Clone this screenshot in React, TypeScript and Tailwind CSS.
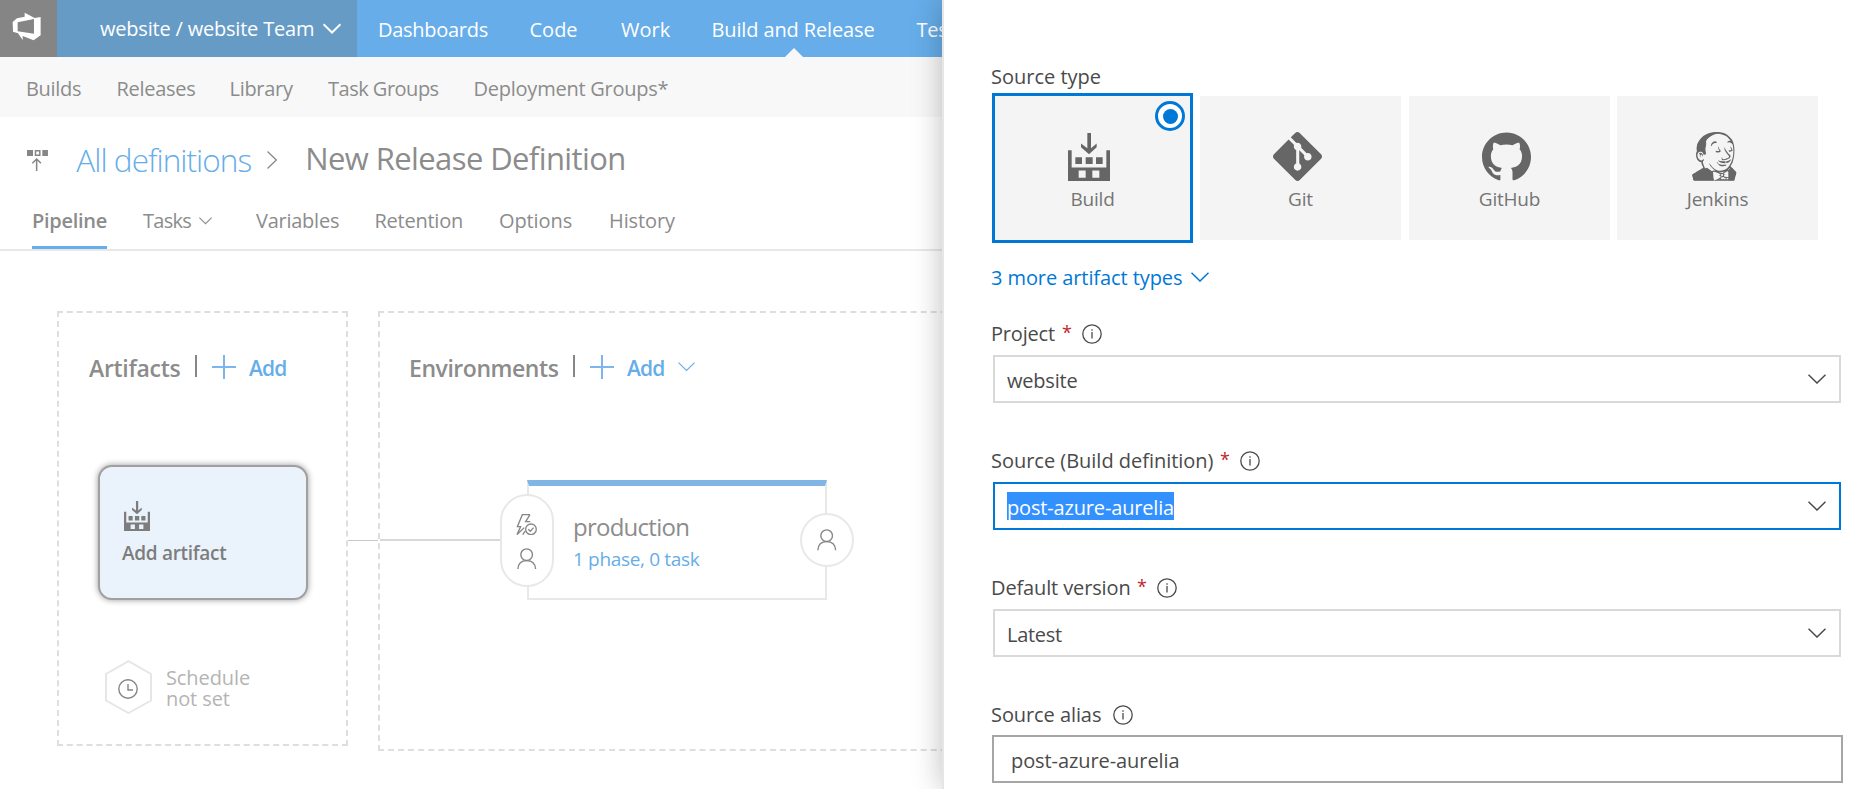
import React from 'react';
import { FaJenkins } from 'react-icons/fa';
import { SiGit, SiGithub } from 'react-icons/si';

function Chevron({ className = '', stroke = 1.3 }: { className?: string; stroke?: number }) {
  return (
    <svg viewBox="0 0 18 10" className={`shrink-0 ${className}`} fill="none" stroke="currentColor" strokeWidth={stroke}>
      <path d="M0.5 0.7 L9 9 L17.5 0.7" />
    </svg>
  );
}

function Plus() {
  return (
    <svg viewBox="0 0 24 24" className="ml-[15px] h-6 w-6 shrink-0" stroke="#7db5ec" strokeWidth="2">
      <path d="M12 0V24M0 12H24" />
    </svg>
  );
}

function BuildIcon({ className = '' }: { className?: string }) {
  return (
    <svg viewBox="294 245 126 145" className={className} fill="currentColor" preserveAspectRatio="none">
      <path
        fillRule="evenodd"
        d="M294 297h11v52h104v-52h11v93H294zM326 358v22h21v-22zM367 358v22h21v-22z"
      />
      <path d="M316 318h20v21h-20zM347 318h21v21h-21zM378 318h20v21h-20z" />
      <path d="M352 245h11v46l17-14v11l-23 21-24-21v-11l19 14z" />
    </svg>
  );
}

function Person() {
  return (
    <svg viewBox="0 0 58 64" className="h-[21.3px] w-[19.3px]" fill="none" stroke="#868686" strokeWidth="4.2">
      <circle cx="29" cy="20" r="17.5" />
      <path d="M2.5 64C3.500 46 15 38 29 38S55 46 56 64" />
    </svg>
  );
}

function JenkinsIcon() {
  return (
    <div className="relative flex h-[48.700px] w-[48.700px] items-center justify-center">
      <FaJenkins className="h-[48.700px] w-[48.700px]" />
      <svg viewBox="877 245 132 146" className="absolute inset-y-0 left-[2.500px] h-full w-[44px]" fill="currentColor">
        <path d="M918 311L903 303 892 305C888 285 897 268 912 256 925 247 945 244 960 247 942 250 924 260 919 272 916 284 915 296 918 311z" />
        <path d="M878 373L900 361 922 352 940 365 942 390H881z" />
        <path d="M986 359L996 351 1008 366 1004 390H986z" />
      </svg>
    </div>
  );
}

function Info() {
  return (
    <svg viewBox="0 0 20 20" className="h-5 w-5 shrink-0" fill="none" stroke="#4a4a4a" strokeWidth="1.300">
      <circle cx="10" cy="10" r="9.200" />
      <path d="M10 8V14.500M10 5.200V6.700" />
    </svg>
  );
}

function Label({ text, width, required = true, className = '' }: { text: string; width: string; required?: boolean; className?: string }) {
  return (
    <div className={`-ml-px flex h-[30px] items-center pt-0.5 text-[#4a4a4a] ${className}`}>
      <span className={`shrink-0 ${width}`}>{text}</span>
      {required && <span className="-mt-1 w-5 shrink-0 text-[18px] text-[#c0272d]">*</span>}
      <Info />
    </div>
  );
}

function Select({ border, children }: { border: string; children: React.ReactNode }) {
  return (
    <div className={`ml-px mt-[7px] flex h-12 w-[848px] items-center justify-between border-2 pl-3 pr-[13px] text-[#4a4a4a] ${border}`}>
      {children}
      <Chevron className="-mt-[1px] h-[10px] w-[18px]" stroke={1.5} />
    </div>
  );
}

function Tile({ icon, label, className }: { icon: React.ReactNode; label: string; className: string }) {
  return (
    <div className={`flex w-[201px] flex-col items-center bg-[#f4f4f4] text-[#666] ${className}`}>
      <div className="mr-[7px] mt-9 flex h-[49px] items-center">{icon}</div>
      <div className="mt-[3px] h-[30px] text-[19px] leading-[30px] tracking-[-0.2px] text-[#757575]">{label}</div>
    </div>
  );
}

export default function App() {
  return (
    <div className="flex h-[789px] w-[1850px] overflow-hidden whitespace-nowrap bg-white font-['Open_Sans',sans-serif] text-[20px] leading-[30px] font-normal tracking-[-0.2px] text-[#8c8c8c]">
      <main className="flex w-[942px] shrink-0 flex-col overflow-hidden">
        <header className="flex h-[57px] shrink-0 bg-[#66ade9] text-white">
          <div className="flex w-[57px] shrink-0 bg-[#858585] pl-[12.300px] pt-3">
            <svg viewBox="37 36 88 86" className="h-[28.700px] w-[29.300px]" fill="white">
              <path fillRule="evenodd" d="M39 66L52 55 75 50V38L105 54 123 51V106L102 121 69 108V120L55 100 40 95zM54 67V94L103 101V57z" />
            </svg>
          </div>
          <div className="flex w-[300px] shrink-0 items-center bg-[#669bc6] pl-[43px]">
            <span className="w-[223px]">website / website Team</span>
            <Chevron className="h-[11px] w-[18px]" stroke={2} />
          </div>
          <nav className="flex shrink-0 items-center pl-[21px] pt-[3px]">
            <a className="w-[151.500px] tracking-[-0.280px]">Dashboards</a>
            <a className="w-[91.500px] tracking-normal">Code</a>
            <a className="w-[90.500px] tracking-normal">Work</a>
            <div className="relative flex h-[54px] w-[205px] items-center tracking-[-0.130px]">
              Build and Release
              <svg viewBox="0 0 18 9" className="absolute bottom-0 left-[73px] h-[9px] w-[18px]" fill="#f8f8f8">
                <path d="M0 9L9 0 18 9z" />
              </svg>
            </div>
            <a>Test</a>
          </nav>
        </header>

        <nav className="flex h-[60px] shrink-0 items-center bg-[#f8f8f8] pl-[26px] pt-1 tracking-[-0.300px]">
          <a className="w-[90.500px]">Builds</a>
          <a className="w-[113px]">Releases</a>
          <a className="w-[98.500px]">Library</a>
          <a className="w-[145.500px] tracking-[-0.500px]">Task Groups</a>
          <a className="tracking-[-0.240px]">Deployment Groups*</a>
        </nav>

        <div className="flex h-[86px] shrink-0 items-center pl-[27px]">
          <svg viewBox="81 450 64 63" className="h-[21px] w-[21.300px] shrink-0" fill="#868686">
            <path d="M81 450h18v18H81zM127 450h17v18H127z" />
            <path d="M106.500 452.500h13v13h-13zM110 513V477M97 490L110 477 123 490" fill="none" stroke="#868686" strokeWidth="4.500" />
          </svg>
          <a className="ml-[28px] w-[191px] text-[31.500px] font-light leading-10 tracking-[-0.950px] text-[#66ade9]">All definitions</a>
          <svg viewBox="0 0 10 18" className="h-[18px] w-[10px] shrink-0" fill="none" stroke="#868686" strokeWidth="1.200">
            <path d="M0.500 0.500L9.300 9 0.500 17.500" />
          </svg>
          <h1 className="-mt-[5px] ml-[28px] text-[31px] leading-10 tracking-[-0.600px]">New Release Definition</h1>
        </div>

        <nav className="flex h-12 shrink-0 border-b-2 border-[#e8e8e8] pl-8 leading-[36px]">
          <a className="h-[46px] w-[75px] border-b-[3px] border-[#66ade9] font-semibold tracking-[-0.280px]">Pipeline</a>
          <a className="ml-9 flex w-[113px]">
            <span className="w-14 tracking-[-0.700px]">Tasks</span>
            <Chevron className="mt-[14px] h-[7.500px] w-[13px]" stroke={1.5} />
          </a>
          <a className="w-[118.500px] tracking-[-0.250px]">Variables</a>
          <a className="w-[124.500px] tracking-[-0.250px]">Retention</a>
          <a className="w-[110px] tracking-[-0.100px]">Options</a>
          <a className="tracking-[-0.100px]">History</a>
        </nav>

        <div className="flex pl-[57px] pt-[60px]">
          <section className="h-[435px] w-[291px] shrink-0 border-2 border-dashed border-[#dedede] pt-[36px]">
            <div className="flex h-9 items-center pl-[30px]">
              <h2 className="mt-px w-[106px] text-[23px] font-semibold tracking-[-0.300px]">Artifacts</h2>
              <div className="-mt-0.5 h-[22px] w-0.5 bg-[#868686]" />
              <Plus />
              <a className="ml-[13px] mt-px text-[21px] font-semibold tracking-[-0.800px] text-[#66ade9]">Add</a>
            </div>
            <div className="ml-[39px] mt-[80px] h-[135px] w-[210px] rounded-[14px] border-2 border-[#a0a0a0] bg-[#eaf3fb] pl-6 pt-[34px] text-[#7d7d7d] shadow-[0_0_6px_rgba(0,0,0,0.4)]">
              <BuildIcon className="h-[30px] w-[26px]" />
              <div className="-ml-0.5 mt-[10px] text-[19px] font-semibold leading-6 tracking-[-0.300px]">Add artifact</div>
            </div>
            <div className="ml-[46px] mt-[60px] flex">
              <svg viewBox="0 0 47 54" className="h-[54px] w-[47px]" fill="none">
                <path d="M23.500 1.200L46 14V40.500L23.500 53 1 40.500V14z" stroke="#e6e6e6" strokeWidth="2" />
                <circle cx="23" cy="29" r="9.200" stroke="#868686" strokeWidth="1.400" />
                <path d="M23 24V30H28" stroke="#868686" strokeWidth="1.400" />
              </svg>
              <div className="ml-[14px] mt-[7px] leading-[21px] tracking-[-0.100px] text-[#b4b4b4]">
                Schedule
                <br />
                not set
              </div>
            </div>
          </section>

          <div className="mt-[229px] h-px w-[30px] shrink-0 bg-[#c8c8c8]" />

          <section className="h-[440px] w-[820px] shrink-0 border-2 border-dashed border-[#dedede] pt-[36px]">
            <div className="flex h-9 items-center pl-[29px]">
              <h2 className="mt-px w-[164px] text-[23px] font-semibold tracking-[-0.450px]">Environments</h2>
              <div className="-mt-0.5 h-[22px] w-0.5 bg-[#868686]" />
              <Plus />
              <a className="ml-[13px] mt-px w-[51px] text-[21px] font-semibold tracking-[-0.800px] text-[#66ade9]">Add</a>
              <Chevron className="h-[9.500px] w-[17px] text-[#66ade9]" stroke={1.2} />
            </div>
            <div className="mt-[95px] flex">
              <div className="mt-[59px] h-0.5 w-[120px] bg-[#d8d8d8]" />
              <div className="z-10 mt-[14px] flex h-[93px] w-[54px] flex-col items-center rounded-full border-2 border-[#e8e8e8] bg-white pt-[17.500px]">
                <svg viewBox="138 671 64 65" className="h-[21.600px] w-[21.300px] shrink-0" fill="none" stroke="#868686" strokeWidth="4">
                  <path d="M180 673H157L142 709H152L141 733 163 712M180 673L167 694H181M158 733L166 722" />
                  <circle cx="183" cy="717" r="16" />
                  <path d="M175 717L181 723 191 712" />
                </svg>
                <div className="mt-[12.500px]">
                  <Person />
                </div>
              </div>
              <div className="-ml-[27px] h-[120px] w-[300px] border-2 border-t-[6px] border-[#e8e8e8] border-t-[#80b6e6] bg-white pl-11 pt-[23px]">
                <div className="text-[24px] leading-9 tracking-[-0.750px]">production</div>
                <div className="text-[19px] leading-[29px] tracking-[-0.340px] text-[#66ade9]">1 phase, 0 task</div>
              </div>
              <div className="-ml-[27px] mt-[33px] flex h-[54px] w-[54px] items-center justify-center rounded-full border-2 border-[#e8e8e8] bg-white">
                <Person />
              </div>
            </div>
          </section>
        </div>
      </main>

      <aside className="z-10 w-[908px] shrink-0 border-l-2 border-[#e6e6e6] bg-white pl-12 pt-16 shadow-[0_0_28px_rgba(0,0,0,0.26)]">
        <div className="-ml-px h-6 leading-[26px] tracking-normal text-[#4a4a4a]">Source type</div>
        <div className="mt-[5px] flex">
          <div className="relative h-[150px] border-[3px] border-[#0078d7]">
            <Tile icon={<BuildIcon className="h-12 w-[42px]" />} label="Build" className="-mx-[3px] h-36 border-x-[3px] border-[#0078d7]" />
            <div className="absolute right-[5px] top-[5px] flex h-[30px] w-[30px] items-center justify-center rounded-full border-[3px] border-[#0078d7] bg-white">
              <div className="h-[15px] w-[15px] rounded-full bg-[#0078d7]" />
            </div>
          </div>
          <Tile icon={<SiGit size={49} />} label="Git" className="ml-[7px] mt-[3px] h-36" />
          <Tile icon={<SiGithub size={49} />} label="GitHub" className="ml-2 mt-[3px] h-36" />
          <Tile icon={<JenkinsIcon />} label="Jenkins" className="ml-[7px] mt-[3px] h-36" />
        </div>
        <div className="-ml-px mt-[19px] flex h-[30px] items-center text-[#0078d7]">
          <span className="mt-0.5 w-[200px] tracking-[-0.080px]">3 more artifact types</span>
          <Chevron className="h-[10px] w-[18px]" stroke={1.5} />
        </div>

        <Label text="Project" width="w-[71px]" className="mt-[26px]" />
        <Select border="border-[#d9d9d9]">
          <span className="mt-[3px]">website</span>
        </Select>

        <Label text="Source (Build definition)" width="w-[229px] tracking-[-0.020px]" className="mt-[42px]" />
        <Select border="border-[#0078d7]">
          <span className="h-7 bg-[#3390ff] leading-[31px] tracking-[-0.160px] text-white">post-azure-aurelia</span>
        </Select>

        <Label text="Default version" width="w-[146px] tracking-[-0.130px]" className="mt-[42px]" />
        <Select border="border-[#d9d9d9]">
          <span className="mt-[3px] tracking-[-0.300px]">Latest</span>
        </Select>

        <Label text="Source alias" width="w-[122px] tracking-[-0.080px]" required={false} className="mt-[42px]" />
        <div className="mt-1.5 flex h-12 w-[851px] items-center border-2 border-[#a6a6a6] pl-[17px] pt-[3px] tracking-[-0.080px] text-[#4a4a4a]">
          post-azure-aurelia
        </div>
      </aside>
    </div>
  );
}
